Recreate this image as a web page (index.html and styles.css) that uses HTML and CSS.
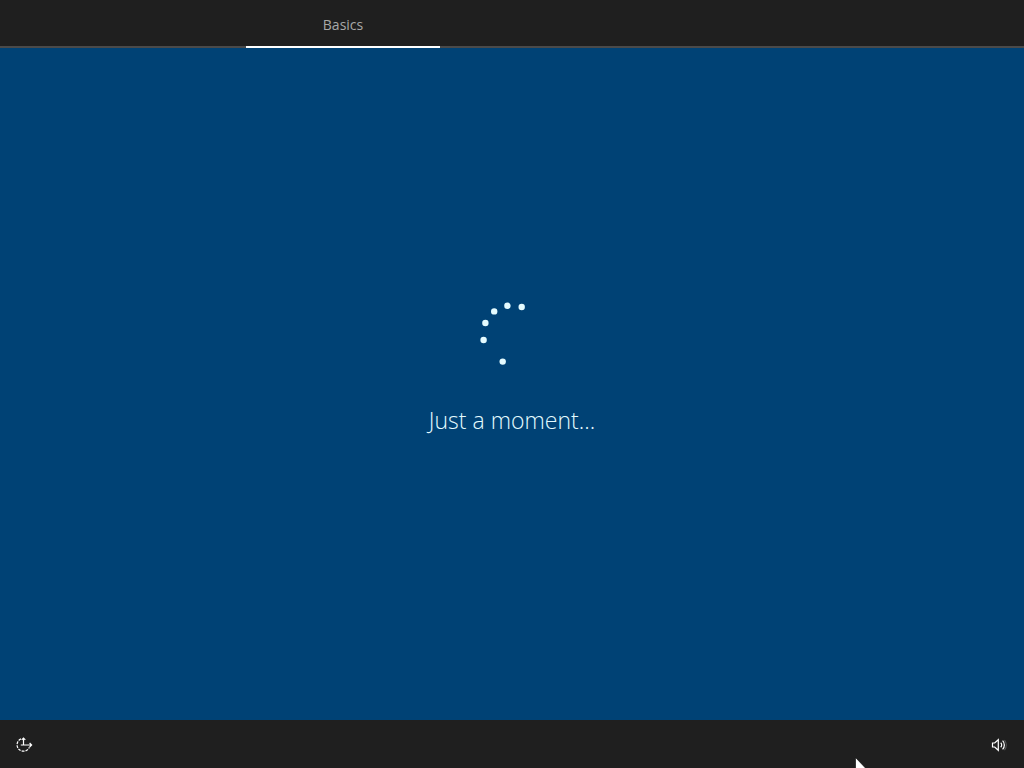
FILE: index.html
```html
<!DOCTYPE html>
<html lang="en">
<head>
  <meta charset="UTF-8">
  <meta name="viewport" content="width=device-width, initial-scale=1.0">
  <title>Setup</title>
  <link rel="stylesheet" href="styles.css">
</head>
<body>

  <header class="topbar">
    <nav class="tabs">
      <a class="tab active" href="#basics">Basics</a>
    </nav>
  </header>

  <main class="content" id="basics">
    <svg class="spinner" viewBox="0 0 64 64" aria-hidden="true">
      <circle cx="41.7" cy="5" r="3.2"/>
      <circle cx="27.4" cy="3.8" r="3.2"/>
      <circle cx="14.2" cy="9.4" r="3.2"/>
      <circle cx="5.4" cy="21" r="3.2"/>
      <circle cx="3.6" cy="38" r="3.2"/>
      <circle cx="22.7" cy="59.6" r="3.2"/>
    </svg>
    <h1 class="message">Just a moment...</h1>
  </main>

  <footer class="bottombar">
    <button class="icon-btn" type="button" aria-label="Ease of access">
      <svg viewBox="0 0 20 20">
        <path d="M9.5 4v7M6.8 11h10.7M15.6 9l2 2-2 2M7.7 5.8l1.8-1.8 1.8 1.8"/>
        <path d="M7 4.9A6.4 6.4 0 1 0 15.4 13.2" stroke-dasharray="2.8 1.1"/>
      </svg>
    </button>
    <button class="icon-btn" type="button" aria-label="Volume">
      <svg viewBox="0 0 20 20">
        <path d="M2.5 9h2.2l3.6-3.3v10.6L4.7 13H2.5z"/>
        <path d="M10.7 8.8a3 3 0 0 1 0 4.4M12.6 6.6a6.4 6.4 0 0 1 0 8.8"/>
        <path class="faint" d="M14.5 6a8 8 0 0 1 0 10"/>
      </svg>
    </button>
  </footer>

  <!-- mouse pointer, runs off the bottom edge -->
  <svg class="cursor" viewBox="0 0 12 19" aria-hidden="true">
    <path d="M.5.5v16l3.7-3.6 2.4 5.6 2.2-1-2.4-5.4h5.1z"/>
  </svg>

</body>
</html>
```

FILE: styles.css
```css
* {
  box-sizing: border-box;
}

body {
  margin: 0;
  min-height: 100vh;
  display: flex;
  flex-direction: column;
  position: relative;
  overflow: hidden;
  background-color: #004275;
  color: white;
  font-family: "Open Sans", "Noto Sans", sans-serif;
}

.topbar {
  height: 48px;
  background-color: #1f1f1f;
  border-bottom: 2px solid #4a4a4a;
}

.tabs {
  display: flex;
  padding-left: 24%;
}

.tab {
  width: 25%;
  height: 48px;
  line-height: 50px;
  text-align: center;
  font-size: 14px;
  color: #a8a8a8;
  text-decoration: none;
}

.tab.active {
  border-bottom: 2px solid white;
}

.content {
  flex: 1;
  display: flex;
  flex-direction: column;
  align-items: center;
  justify-content: center;
  gap: 38px;
  padding-bottom: 30px;
}

.spinner {
  width: 64px;
  height: 64px;
  fill: #e4fbff;
}

.message {
  margin: 0;
  font-size: 23px;
  line-height: 32px;
  font-weight: 350;
  color: #e4fbff;
}

.bottombar {
  display: flex;
  justify-content: space-between;
  height: 48px;
  background-color: #1f1f1f;
}

.icon-btn {
  width: 48px;
  height: 48px;
  padding: 14px;
  border: none;
  background: none;
}

.icon-btn svg {
  display: block;
  width: 20px;
  height: 20px;
  fill: none;
  stroke: white;
  stroke-width: 1.2;
}

.icon-btn .faint {
  stroke: #555;
}

.cursor {
  position: absolute;
  right: 157px;
  bottom: -8px;
  width: 12px;
  height: 19px;
  fill: white;
  stroke: black;
  stroke-width: 0.6;
}
```
